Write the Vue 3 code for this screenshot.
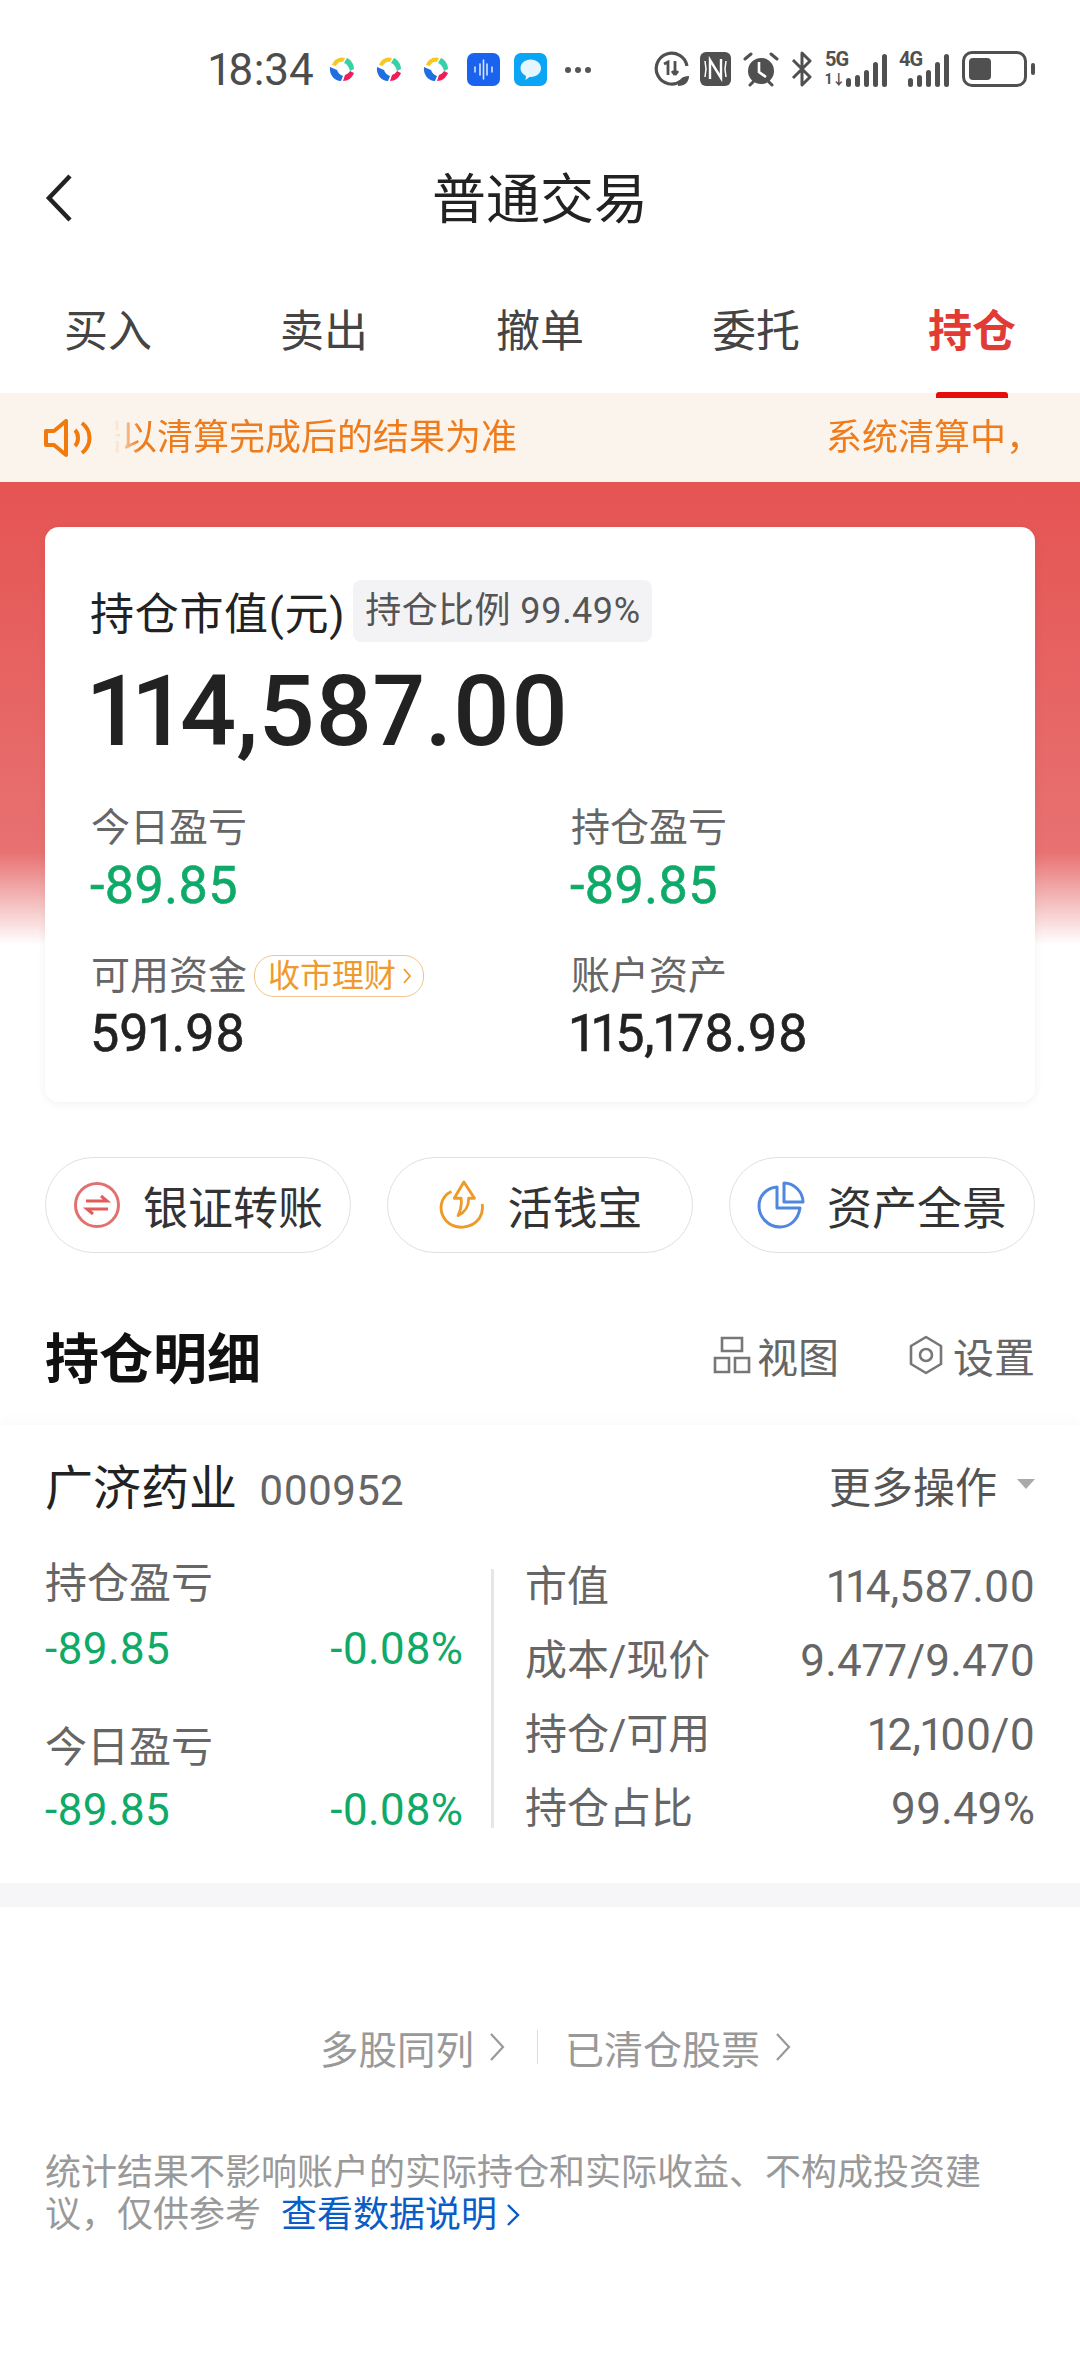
<template>
  <div class="page">
    <div class="status">
      <span class="time">18:34</span>
      <svg v-for="n in 3" :key="n" class="app-dot" viewBox="0 0 26 26">
        <path d="M3 9 C5 3 11 0 16 2 L14 6 C11 5 8 7 7 10 Z" fill="#f9c81e" />
        <path d="M18 2 C22 4 25 8 25 13 L21 15 C20 11 18 8 15 7 Z" fill="#38d0a5" />
        <path d="M1 11 L8 14 C9 17 11 19 14 20 L12 25 C5 25 0 18 1 11 Z" fill="#1f6fe0" />
        <path d="M14 25 L16 19 C18 18 20 17 21 15 L25 17 C23 22 19 25 14 25 Z" fill="#f01d5a" />
      </svg>
      <svg class="app-square voice" viewBox="0 0 33 33">
        <rect width="33" height="33" rx="7" fill="#1a63ee" />
        <path d="M8 14v5M13 11v11M16.500 7v19M20 11v11M25 14v5" stroke="#d5e4ff" stroke-width="1.600" stroke-linecap="round" />
      </svg>
      <svg class="app-square msg" viewBox="0 0 33 33">
        <rect width="33" height="33" rx="7" fill="#0aa6f5" />
        <path d="M16.500 6.500c6 0 10.500 3.800 10.500 8.700s-4.500 8.700-10.500 8.700l-1 0-4 3 .5-4c-3.300-1.500-5.500-4.300-5.500-7.700 0-4.900 4.500-8.700 10-8.700z" fill="#e6f6ff" />
      </svg>
      <span class="more-dots"><i></i><i></i><i></i></span>
      <svg class="s-ic hd" viewBox="0 0 36 36">
        <path d="M27 30A15.500 15.500 0 1 1 33 15" fill="none" stroke="#505050" stroke-width="3.200" />
        <path d="M10 13l4-2v13M21 10v14M21 24l-3-4M21 24l3-4" fill="none" stroke="#505050" stroke-width="2.800" />
        <path d="M24 35c0-6 4-10 11-10 0 6-4 10-11 10z" fill="#505050" />
      </svg>
      <svg class="s-ic nfc" viewBox="0 0 31 34">
        <rect width="31" height="34" rx="6" fill="#505050" />
        <path d="M10 27V8l11 18V7" fill="none" stroke="#fff" stroke-width="2.400" />
        <path d="M5 9l1 8-1 8M26 9l-1 8 1 8" fill="none" stroke="#fff" stroke-width="1.500" />
      </svg>
      <svg class="s-ic alarm" viewBox="0 0 36 36">
        <circle cx="18" cy="20" r="13" fill="#505050" />
        <path d="M2 8l6-5M34 8l-6-5M7 34l3-3M29 34l-3-3" stroke="#505050" stroke-width="3" stroke-linecap="round" />
        <path d="M16 11v10l7 5" fill="none" stroke="#fff" stroke-width="2.600" />
      </svg>
      <svg class="s-ic bt" viewBox="0 0 22 36">
        <path d="M2 9l17 17-8 8V2l8 8L2 27" fill="none" stroke="#505050" stroke-width="3" stroke-linejoin="round" />
      </svg>
      <div class="net five">
        <span class="net-txt">5G</span>
        <span class="arrows">1↓</span>
        <div class="bars"><i style="height: 9px"></i><i style="height: 12px"></i><i style="height: 17px"></i><i style="height: 25px"></i><i style="height: 33px"></i></div>
      </div>
      <div class="net four">
        <span class="net-txt">4G</span>
        <div class="bars"><i style="height: 9px"></i><i style="height: 12px"></i><i style="height: 17px"></i><i style="height: 25px"></i><i style="height: 33px"></i></div>
      </div>
      <div class="battery"><div class="battery-fill"></div></div>
      <div class="battery-nub"></div>
    </div>

    <div class="nav">
      <svg class="back" viewBox="0 0 30 50">
        <path d="M26 3L5 25l21 22" fill="none" stroke="#222" stroke-width="4.500" />
      </svg>
      <span class="nav-title">普通交易</span>
    </div>

    <div class="tabs">
      <div v-for="t in tabs" :key="t" class="tab" :class="{ active: t === '持仓' }">{{ t }}</div>
    </div>

    <div class="notice">
      <svg class="horn" viewBox="0 0 48 38">
        <path d="M2 12h8L22 2v34L10 26H2z" fill="none" stroke="#f07a0d" stroke-width="4" stroke-linejoin="round" />
        <path d="M31 11c4 4 4 12 0 16M38 4c10 8 10 22 0 30" fill="none" stroke="#f07a0d" stroke-width="4" />
      </svg>
      <div class="marquee">
        <div class="marquee-track">
          <span>据以清算完成后的结果为准</span>
          <span>系统清算中，</span>
        </div>
      </div>
    </div>

    <div class="hero">
      <div class="card">
        <div class="card-head">
          <span class="card-label">持仓市值(元)</span>
          <span class="ratio">持仓比例 99.49%</span>
        </div>
        <div class="card-value">114,587.00</div>
        <div class="card-grid">
          <div class="cell">
            <div class="cell-label">今日盈亏</div>
            <div class="cell-num green">-89.85</div>
          </div>
          <div class="cell">
            <div class="cell-label">持仓盈亏</div>
            <div class="cell-num green">-89.85</div>
          </div>
          <div class="cell">
            <div class="cell-label">可用资金<span class="pill">收市理财<svg viewBox="0 0 10 18"><path d="M2 2l6 7-6 7" fill="none" stroke="#ef9a2d" stroke-width="1.800" /></svg></span></div>
            <div class="cell-num">591.98</div>
          </div>
          <div class="cell">
            <div class="cell-label">账户资产</div>
            <div class="cell-num">115,178.98</div>
          </div>
        </div>
      </div>
    </div>

    <div class="actions">
      <div class="action">
        <svg viewBox="0 0 48 48">
          <circle cx="24" cy="24" r="21.500" fill="none" stroke="#e27070" stroke-width="3" />
          <path d="M13 20h21l-6-5M35 28H14l6 5" fill="none" stroke="#e25c5c" stroke-width="3" />
        </svg>
        <span>银证转账</span>
      </div>
      <div class="action">
        <svg viewBox="0 0 48 52">
          <path d="M14 12C3 17-1 32 9 43c9 9 26 8 34-3 3-5 4-10 3-15" fill="none" stroke="#ee9a28" stroke-width="3" />
          <path d="M27 2l11 17h-6c0 9-3 14-11 18 3-6 4-12 3-18h-7z" fill="none" stroke="#ee9a28" stroke-width="3" stroke-linejoin="round" />
        </svg>
        <span>活钱宝</span>
      </div>
      <div class="action">
        <svg viewBox="0 0 48 48">
          <path d="M20 6C9 7 2 15 2 25c0 11 9 21 21 21 10 0 18-7 20-19H20z" fill="none" stroke="#4f87e0" stroke-width="3" stroke-linejoin="round" />
          <path d="M27 2c10 0 19 9 19 19H27z" fill="none" stroke="#4f87e0" stroke-width="3" stroke-linejoin="round" />
        </svg>
        <span>资产全景</span>
      </div>
    </div>

    <div class="section-head">
      <span class="section-title">持仓明细</span>
      <div class="section-tools">
        <span class="tool">
          <svg class="view-ic" viewBox="0 0 38 38">
            <path d="M9 2h20v13H9zM2 22h14v14H2zM22 22h14v14H22z" fill="none" stroke="#777" stroke-width="2.600" />
          </svg>
          视图
        </span>
        <span class="tool gear">
          <svg class="gear-ic" viewBox="0 0 36 40">
            <path d="M18 2l15 9v18l-15 9-15-9V11z" fill="none" stroke="#777" stroke-width="2.600" stroke-linejoin="round" />
            <circle cx="18" cy="20" r="6" fill="none" stroke="#777" stroke-width="2.600" />
          </svg>
          设置
        </span>
      </div>
    </div>

    <div class="stock">
      <div class="stock-head">
        <div class="stock-name"><span class="name">广济药业</span><span class="code">000952</span></div>
        <div class="stock-more">更多操作<i class="caret"></i></div>
      </div>
      <div class="stock-body">
        <div class="stock-left">
          <div v-for="p in profits" :key="p" class="profit">
            <div class="profit-label">{{ p }}</div>
            <div class="profit-nums"><span>-89.85</span><span>-0.08%</span></div>
          </div>
        </div>
        <div class="stock-right">
          <div v-for="r in rows" :key="r[0]" class="stock-row">
            <span>{{ r[0] }}</span><span>{{ r[1] }}</span>
          </div>
        </div>
      </div>
    </div>

    <div class="band"></div>

    <div class="links">
      <span class="link">多股同列<svg viewBox="0 0 16 30"><path d="M2 2l12 13L2 28" fill="none" stroke="#999" stroke-width="2.200" /></svg></span>
      <i class="link-sep"></i>
      <span class="link">已清仓股票<svg viewBox="0 0 16 30"><path d="M2 2l12 13L2 28" fill="none" stroke="#999" stroke-width="2.200" /></svg></span>
    </div>

    <div class="foot">
      统计结果不影响账户的实际持仓和实际收益、不构成投资建议，仅供参考
      <span class="foot-link">查看数据说明<svg viewBox="0 0 14 24"><path d="M2 2l10 10L2 22" fill="none" stroke="#0a5cc7" stroke-width="2.400" /></svg></span>
    </div>
  </div>
</template>

<script setup>
const tabs = ['买入', '卖出', '撤单', '委托', '持仓']
const profits = ['持仓盈亏', '今日盈亏']
const rows = [
  ['市值', '114,587.00'],
  ['成本/现价', '9.477/9.470'],
  ['持仓/可用', '12,100/0'],
  ['持仓占比', '99.49%']
]
</script>

<style>
body {
  margin: 0;
  background: #fff;
}
</style>

<style scoped>
.page {
  width: 1080px;
  height: 2376px;
  overflow: hidden;
  background: #fff;
  font-family: Roboto, "Noto Sans CJK SC", sans-serif;
  font-variant-numeric: proportional-nums;
  color: #222;
}

.status {
  height: 130px;
  box-sizing: border-box;
  padding: 51px 0 0 209px;
  display: flex;
  align-items: flex-start;
}
.time {
  font-size: 44px;
  line-height: 38px;
  color: #4c4c4c;
  width: 120px;
}
.app-dot {
  width: 26px;
  height: 26px;
  margin: 5px 21px 0 0;
}
.app-square {
  width: 33px;
  height: 33px;
  margin-top: 2px;
}
.voice {
  margin: 2px 14px 0 -3px;
}
.more-dots {
  display: flex;
  gap: 4px;
  margin: 16px 63px 0 18px;
}
.more-dots i {
  width: 6px;
  height: 6px;
  border-radius: 50%;
  background: #555;
}
.s-ic {
  height: 36px;
  flex: none;
  margin-right: 12px;
}
.hd {
  width: 36px;
  margin-right: 10px;
}
.nfc {
  width: 31px;
  height: 34px;
  margin-top: 1px;
}
.alarm {
  width: 36px;
}
.bt {
  width: 22px;
}
.net {
  position: relative;
  flex: none;
  height: 36px;
  margin-right: 12px;
  color: #505050;
}
.five {
  width: 62px;
}
.four {
  width: 50px;
  margin-right: 13px;
}
.net-txt {
  position: absolute;
  left: 0;
  top: -2px;
  font-size: 20px;
  line-height: 20px;
  font-weight: 700;
  letter-spacing: -1px;
}
.arrows {
  position: absolute;
  left: 0;
  bottom: 0;
  font-size: 14px;
  line-height: 15px;
  font-weight: 700;
}
.bars {
  position: absolute;
  right: 0;
  bottom: 0;
  display: flex;
  align-items: flex-end;
  gap: 4px;
}
.bars i {
  width: 5px;
  background: #505050;
  border-radius: 3px;
}
.battery {
  width: 65px;
  height: 36px;
  box-sizing: border-box;
  border: 3px solid #505050;
  border-radius: 10px;
  padding: 4px;
}
.battery-fill {
  width: 22px;
  height: 100%;
  background: #505050;
  border-radius: 4px;
}
.battery-nub {
  width: 4px;
  height: 12px;
  margin: 12px 0 0 4px;
  border-radius: 2px;
  background: #505050;
}

.nav {
  position: relative;
  height: 136px;
  box-sizing: border-box;
  padding-bottom: 6px;
  display: flex;
  align-items: center;
  justify-content: center;
}
.back {
  position: absolute;
  left: 44px;
  top: 43px;
  width: 30px;
  height: 50px;
}
.nav-title {
  font-size: 54px;
  color: #222;
}

.tabs {
  height: 127px;
  display: grid;
  grid-template-columns: repeat(5, 216px);
}
.tab {
  position: relative;
  text-align: center;
  font-size: 44px;
  line-height: 132px;
  color: #444;
}
.tab.active {
  color: #e23a35;
  font-weight: 700;
}
.tab.active::after {
  content: "";
  position: absolute;
  left: 72px;
  bottom: 0;
  width: 72px;
  height: 6px;
  border-radius: 3px 3px 0 0;
  background: #e60d0d;
}

.notice {
  height: 89px;
  background: #fbf4ec;
  display: flex;
  align-items: center;
  padding: 0 44px;
  gap: 18px;
  box-sizing: border-box;
}
.horn {
  width: 48px;
  height: 38px;
  flex: none;
}
.marquee {
  flex: 1;
  overflow: hidden;
  -webkit-mask-image: linear-gradient(to right, transparent 4px, #000 30px);
  mask-image: linear-gradient(to right, transparent 4px, #000 30px);
}
.marquee-track {
  display: flex;
  width: 1000px;
  margin-left: -25px;
  gap: 309px;
  font-size: 36px;
  line-height: 50px;
  color: #ef7c1c;
  white-space: nowrap;
}

.hero {
  padding: 45px 45px 0;
  background: linear-gradient(#e55453 0, #e87171 80%, #fff 100%) no-repeat;
  background-size: 100% 463px;
}
.card {
  height: 575px;
  box-sizing: border-box;
  padding: 53px 46px 0;
  background: #fff;
  border-radius: 14px;
  box-shadow: 0 2px 10px rgba(0, 0, 0, 0.06);
}
.card-head {
  display: flex;
  align-items: center;
  height: 62px;
}
.card-label {
  font-size: 44px;
  letter-spacing: 0.7px;
  margin-left: -1px;
  color: #222;
}
.ratio {
  margin-left: 8px;
  height: 62px;
  line-height: 62px;
  padding: 0 12px;
  background: #f3f3f5;
  border-radius: 8px;
  font-size: 36px;
  letter-spacing: 0.4px;
  color: #555;
}
.card-value {
  font-size: 99px;
  font-weight: 500;
  line-height: 120px;
  color: #222;
  margin: 9px 0 0 -2px;
}
.card-grid {
  display: grid;
  grid-template-columns: 480px 1fr;
  row-gap: 35px;
  margin-top: 32px;
}
.cell-label {
  display: flex;
  align-items: center;
  font-size: 39px;
  line-height: 50px;
  color: #666;
}
.cell-num {
  font-size: 52px;
  font-weight: 400;
  -webkit-text-stroke: 0.6px currentColor;
  line-height: 60px;
  margin: 3px 0 0 -1px;
  color: #222;
}
.green {
  color: #0fa968;
}
.pill {
  display: inline-flex;
  align-items: center;
  gap: 6px;
  margin-left: 7px;
  height: 40px;
  padding: 0 11px 0 13px;
  border: 1px solid #f2c38c;
  border-radius: 20px;
  font-size: 32px;
  color: #ef9a2d;
}
.pill svg {
  width: 10px;
  height: 18px;
}

.actions {
  display: flex;
  gap: 36px;
  padding: 55px 45px 0;
}
.action {
  flex: 1;
  height: 96px;
  box-sizing: border-box;
  display: flex;
  align-items: center;
  justify-content: center;
  gap: 22px;
  border: 1px solid #e0e0e0;
  border-radius: 48px;
  font-size: 45px;
  color: #333;
}
.action svg {
  width: 48px;
  height: 50px;
  flex: none;
}

.section-head {
  display: flex;
  align-items: center;
  justify-content: space-between;
  padding: 0 45px;
  height: 140px;
  margin-top: 32px;
}
.section-title {
  font-size: 54px;
  font-weight: 700;
  color: #111;
}
.section-tools {
  display: flex;
  gap: 69px;
}
.tool {
  display: flex;
  align-items: center;
  gap: 6px;
  font-size: 41px;
  color: #666;
}
.gear {
  gap: 9px;
}
.view-ic {
  width: 38px;
  height: 38px;
}
.gear-ic {
  width: 36px;
  height: 40px;
}

.stock {
  height: 458px;
  padding: 0 45px;
  box-sizing: border-box;
  box-shadow: 0 -6px 12px rgba(0, 0, 0, 0.02);
}
.stock-head {
  display: flex;
  justify-content: space-between;
  align-items: center;
  height: 118px;
}
.stock-name {
  display: flex;
  align-items: baseline;
  gap: 22px;
}
.name {
  font-size: 48px;
  color: #222;
}
.code {
  font-size: 42px;
  color: #666;
}
.stock-more {
  display: flex;
  align-items: center;
  gap: 20px;
  font-size: 42px;
  color: #555;
}
.caret {
  width: 0;
  height: 0;
  border-left: 9px solid transparent;
  border-right: 9px solid transparent;
  border-top: 10px solid #aaa;
}
.stock-body {
  display: flex;
  margin-top: 26px;
}
.stock-left {
  width: 449px;
  height: 259px;
  box-sizing: border-box;
  padding-right: 28px;
  border-right: 3px solid #e6e6e6;
}
.profit {
  height: 176px;
  margin-top: -10px;
}
.profit + .profit {
  height: auto;
  margin-top: -12px;
}
.profit-label {
  font-size: 42px;
  line-height: 50px;
  color: #666;
}
.profit-nums {
  display: flex;
  justify-content: space-between;
  font-size: 44px;
  line-height: 50px;
  margin-top: 15px;
  color: #0fa968;
}
.profit + .profit .profit-nums {
  margin-top: 12px;
}
.stock-right {
  flex: 1;
  padding-left: 31px;
  margin-top: -7px;
}
.stock-row {
  display: flex;
  justify-content: space-between;
  font-size: 42px;
  line-height: 50px;
  color: #666;
  height: 74px;
}
.stock-row span:last-child {
  font-size: 44px;
}

.band {
  height: 24px;
  background: #f6f6f8;
}

.links {
  display: flex;
  align-items: center;
  margin-top: 115px;
  padding-left: 320px;
  height: 50px;
  font-size: 38.500px;
  color: #999;
}
.link {
  display: flex;
  align-items: center;
  gap: 15px;
}
.link + .link-sep + .link {
  font-size: 39px;
}
.link svg {
  width: 16px;
  height: 30px;
}
.link-sep {
  width: 1px;
  height: 34px;
  background: #ddd;
  margin: 0 27px 0 32px;
}

.foot {
  margin-top: 80px;
  padding: 0 45px;
  font-size: 36px;
  line-height: 42px;
  color: #999;
}
.foot-link {
  display: inline-flex;
  align-items: center;
  gap: 9px;
  margin-left: 11px;
  color: #0a5cc7;
}
.foot-link svg {
  width: 14px;
  height: 24px;
}
</style>
